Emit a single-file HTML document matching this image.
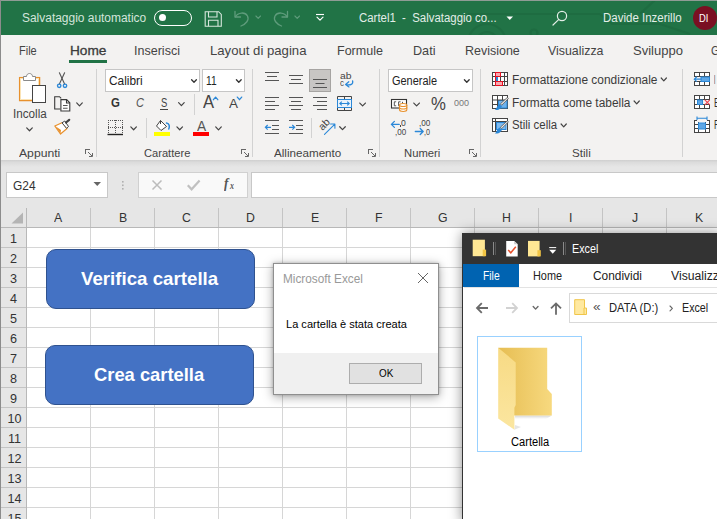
<!DOCTYPE html>
<html lang="it"><head><meta charset="utf-8"><title>Excel</title>
<style>
html,body{margin:0;padding:0;}
body{width:717px;height:519px;overflow:hidden;background:#e6e6e6;font-family:"Liberation Sans",sans-serif;}
#root{position:relative;width:717px;height:519px;overflow:hidden;background:#e6e6e6;}
.b{position:absolute;box-sizing:border-box;}
.t{position:absolute;white-space:pre;transform-origin:0 50%;display:block;}
svg.ov{position:absolute;left:0;top:0;}
</style></head><body><div id="root">
<div class="b" style="left:0px;top:0px;width:717px;height:35px;background:#217346;"></div>
<svg class="ov" width="717" height="519" viewBox="0 0 717 519"><g fill="none" stroke="#1e6c41" stroke-width="2.200"><path d="M468 14 H600 L612 24 H660 L690 34"/><circle cx="487" cy="43" r="19"/><circle cx="487" cy="43" r="11"/><circle cx="534" cy="33" r="3.500"/><path d="M655 0 L640 14"/></g></svg>
<div class="b" style="left:0px;top:35px;width:717px;height:126px;background:#f3f2f1;"></div>
<div class="b" style="left:0px;top:0px;width:717px;height:1px;background:#8f9c95;"></div>
<span class="t" style="left:22.20px;top:11.52px;font-size:12.5px;line-height:12.5px;color:#d4e5db;transform:scaleX(0.9558);">Salvataggio automatico</span>
<div class="b" style="left:154px;top:9.5px;width:38px;height:16px;background:transparent;border:1.3px solid #fff;border-radius:8px;"></div>
<div class="b" style="left:158.5px;top:14px;width:7.4px;height:7.4px;background:#fff;border-radius:50%;"></div>
<span class="t" style="left:358.60px;top:11.52px;font-size:12.5px;line-height:12.5px;color:#e3eee8;transform:scaleX(0.9128);">Cartel1  -  Salvataggio co...</span>
<span class="t" style="left:602.90px;top:11.72px;font-size:12.5px;line-height:12.5px;color:#e3eee8;transform:scaleX(0.9200);">Davide Inzerillo</span>
<div class="b" style="left:693.2px;top:6px;width:24.2px;height:24.2px;background:#7a1022;border-radius:50%;"></div>
<span class="t" style="left:699.40px;top:12.79px;font-size:11px;line-height:11px;color:#fff;transform:scaleX(0.8545);">DI</span>
<svg class="ov" width="717" height="519" viewBox="0 0 717 519"><g fill="none" stroke="#d6e6dc" stroke-width="1.1"><path d="M205.2 11.7 H218.6 L221.3 14.4 V26.3 H205.2 Z"/><path d="M208.5 11.7 V17 H217 V11.7"/><path d="M208.5 26.3 V20.3 H218 V26.3"/></g><g fill="none" stroke="#5f9c7c" stroke-width="1.3" stroke-linecap="round" stroke-linejoin="round"><path d="M235 11.5 V17 H240.5"/><path d="M235.3 16.8 C238 12.2 245 11.6 247.5 16 C249.5 20 246 24 241 26"/><path d="M287.5 11.5 V17 H282"/><path d="M287.2 16.8 C284.5 12.2 277.5 11.6 275 16 C273 20 276.500 24 281.500 26"/></g><path d="M255.90 16.00 L258.20 18.40 L260.50 16.00" fill="none" stroke="#5f9c7c" stroke-width="1.1" stroke-linecap="round" stroke-linejoin="round"/><path d="M294.90 16.00 L297.20 18.40 L299.50 16.00" fill="none" stroke="#5f9c7c" stroke-width="1.1" stroke-linecap="round" stroke-linejoin="round"/><path d="M316 14.5 H324" stroke="#fff" stroke-width="1.1"/><path d="M317.00 17.20 L320.00 20.20 L323.00 17.20" fill="none" stroke="#fff" stroke-width="1.2" stroke-linecap="round" stroke-linejoin="round"/><path d="M506.5 16.5 H513 L509.75 20 Z" fill="#fff"/><g fill="none" stroke="#e4efe8" stroke-width="1.2" stroke-linecap="round"><circle cx="562" cy="16" r="4.6"/><path d="M558.6 19.6 L553 25"/></g></svg>
<span class="t" style="left:18.70px;top:44.50px;font-size:12.4px;line-height:12.4px;color:#444;transform:scaleX(0.8866);">File</span>
<span class="t" style="left:69.70px;top:44.50px;font-size:12.4px;line-height:12.4px;color:#3c3c3c;transform:scaleX(1.1025);-webkit-text-stroke:0.3px #3c3c3c;">Home</span>
<div class="b" style="left:69px;top:60px;width:38px;height:3px;background:#217346;"></div>
<span class="t" style="left:134.00px;top:44.50px;font-size:12.4px;line-height:12.4px;color:#444;transform:scaleX(1.0108);">Inserisci</span>
<span class="t" style="left:210.20px;top:44.50px;font-size:12.4px;line-height:12.4px;color:#444;transform:scaleX(1.0606);">Layout di pagina</span>
<span class="t" style="left:337.40px;top:44.50px;font-size:12.4px;line-height:12.4px;color:#444;transform:scaleX(1.0108);">Formule</span>
<span class="t" style="left:413.30px;top:44.50px;font-size:12.4px;line-height:12.4px;color:#444;transform:scaleX(1.0194);">Dati</span>
<span class="t" style="left:465.00px;top:44.50px;font-size:12.4px;line-height:12.4px;color:#444;transform:scaleX(1.0067);">Revisione</span>
<span class="t" style="left:548.20px;top:44.50px;font-size:12.4px;line-height:12.4px;color:#444;transform:scaleX(0.9986);">Visualizza</span>
<span class="t" style="left:633.00px;top:44.50px;font-size:12.4px;line-height:12.4px;color:#444;transform:scaleX(1.0514);">Sviluppo</span>
<span class="t" style="left:711.00px;top:44.50px;font-size:12.4px;line-height:12.4px;color:#444;transform:scaleX(0.8788);">G</span>
<div class="b" style="left:96px;top:69px;width:1px;height:88px;background:#d2d2d2;"></div>
<div class="b" style="left:252px;top:69px;width:1px;height:88px;background:#d2d2d2;"></div>
<div class="b" style="left:379px;top:69px;width:1px;height:88px;background:#d2d2d2;"></div>
<div class="b" style="left:480px;top:69px;width:1px;height:88px;background:#d2d2d2;"></div>
<div class="b" style="left:682px;top:69px;width:1px;height:88px;background:#d2d2d2;"></div>
<span class="t" style="left:19.40px;top:147.51px;font-size:11.8px;line-height:11.8px;color:#444;transform:scaleX(1.0324);">Appunti</span>
<span class="t" style="left:143.60px;top:147.51px;font-size:11.8px;line-height:11.8px;color:#444;transform:scaleX(0.9430);">Carattere</span>
<span class="t" style="left:274.40px;top:147.51px;font-size:11.8px;line-height:11.8px;color:#444;transform:scaleX(0.9867);">Allineamento</span>
<span class="t" style="left:403.50px;top:147.51px;font-size:11.8px;line-height:11.8px;color:#444;transform:scaleX(0.9539);">Numeri</span>
<span class="t" style="left:572.30px;top:147.51px;font-size:11.8px;line-height:11.8px;color:#444;transform:scaleX(0.9843);">Stili</span>
<div class="b" style="left:0px;top:160px;width:717px;height:7px;background:linear-gradient(#cfcfcf,#dcdcdc 35%,#e6e6e6);"></div>
<span class="t" style="left:12.70px;top:107.54px;font-size:12px;line-height:12px;color:#444;transform:scaleX(0.9729);">Incolla</span>
<div class="b" style="left:105px;top:69px;width:95px;height:23px;background:#fff;border:1px solid #c6c6c6;"></div>
<span class="t" style="left:108.60px;top:75.04px;font-size:12px;line-height:12px;color:#222;transform:scaleX(0.9877);">Calibri</span>
<div class="b" style="left:202px;top:69px;width:43px;height:23px;background:#fff;border:1px solid #c6c6c6;"></div>
<span class="t" style="left:206.00px;top:75.04px;font-size:12px;line-height:12px;color:#222;transform:scaleX(0.8494);">11</span>
<span class="t" style="left:111.30px;top:96.90px;font-size:12.4px;line-height:12.4px;color:#333;transform:scaleX(0.9202);font-weight:700;">G</span>
<span class="t" style="left:135.80px;top:96.90px;font-size:12.4px;line-height:12.4px;color:#555;transform:scaleX(0.8948);font-style:italic;">C</span>
<span class="t" style="left:160.90px;top:96.90px;font-size:12.4px;line-height:12.4px;color:#444;transform:scaleX(0.7640);">S</span>
<div class="b" style="left:160px;top:109px;width:8.4px;height:1px;background:#444;"></div>
<div class="b" style="left:194px;top:94px;width:1px;height:21px;background:#d2d2d2;"></div>
<span class="t" style="left:203.00px;top:93.82px;font-size:17.7px;line-height:17.7px;color:#444;transform:scaleX(0.9360);">A</span>
<span class="t" style="left:228.60px;top:97.29px;font-size:13.6px;line-height:13.6px;color:#444;transform:scaleX(0.9877);">A</span>
<div class="b" style="left:146px;top:118px;width:1px;height:20px;background:#d2d2d2;"></div>
<span class="t" style="left:196.60px;top:118.10px;font-size:15px;line-height:15px;color:#555;transform:scaleX(0.9154);">A</span>
<div class="b" style="left:309px;top:69px;width:22px;height:23px;background:#c8c6c4;border:1px solid #a6a4a2;"></div>
<span class="t" style="left:339.50px;top:71.88px;font-size:9px;line-height:9px;color:#444;transform:scaleX(1.1512);">ab</span>
<span class="t" style="left:339.80px;top:79.38px;font-size:9px;line-height:9px;color:#444;transform:scaleX(0.8889);">c</span>
<div class="b" style="left:311px;top:118px;width:1px;height:20px;background:#d2d2d2;"></div>
<span class="t" style="left:319.800px;top:122.800px;width:11.500px;text-align:center;font-size:10.500px;line-height:11px;color:#444;transform:rotate(-45deg);transform-origin:50%% 50%%;">ab</span>
<div class="b" style="left:388px;top:69px;width:85px;height:23px;background:#fff;border:1px solid #c6c6c6;"></div>
<span class="t" style="left:392.00px;top:75.04px;font-size:12px;line-height:12px;color:#222;transform:scaleX(0.9113);">Generale</span>
<span class="t" style="left:430.50px;top:94.66px;font-size:18.6px;line-height:18.6px;color:#444;transform:scaleX(0.9001);">%</span>
<span class="t" style="left:454.20px;top:99.21px;font-size:9.2px;line-height:9.2px;color:#777;transform:scaleX(0.9763);">000</span>
<span class="t" style="left:401.20px;top:119.10px;font-size:8.5px;line-height:8.5px;color:#444;transform:scaleX(1.0175);">0</span>
<div class="b" style="left:400px;top:125.3px;width:1px;height:1.6px;background:#444;"></div>
<span class="t" style="left:394.80px;top:127.70px;font-size:8.5px;line-height:8.5px;color:#444;transform:scaleX(0.9479);">,00</span>
<span class="t" style="left:418.60px;top:119.10px;font-size:8.5px;line-height:8.5px;color:#444;transform:scaleX(0.9649);">,00</span>
<span class="t" style="left:424.00px;top:127.70px;font-size:8.5px;line-height:8.5px;color:#444;transform:scaleX(0.8454);">,0</span>
<span class="t" style="left:511.50px;top:73.54px;font-size:12px;line-height:12px;color:#3b3b3b;transform:scaleX(0.9914);">Formattazione condizionale</span>
<span class="t" style="left:511.50px;top:96.64px;font-size:12px;line-height:12px;color:#3b3b3b;transform:scaleX(0.9920);">Formatta come tabella</span>
<span class="t" style="left:511.50px;top:119.24px;font-size:12px;line-height:12px;color:#3b3b3b;transform:scaleX(0.9515);">Stili cella</span>
<span class="t" style="left:714.20px;top:73.54px;font-size:12px;line-height:12px;color:#222;transform:scaleX(0.3869);">I</span>
<span class="t" style="left:713.80px;top:96.64px;font-size:12px;line-height:12px;color:#333;transform:scaleX(0.7143);">E</span>
<span class="t" style="left:713.80px;top:119.24px;font-size:12px;line-height:12px;color:#333;transform:scaleX(0.7104);">F</span>
<svg class="ov" width="717" height="519" viewBox="0 0 717 519"><path d="M85 149.5 H90 M85.5 149 V154" stroke="#666" stroke-width="1" fill="none"/><path d="M88 152 L92 156 M92.5 153 V156.5 H89" stroke="#666" stroke-width="1" fill="none"/><path d="M241 149.5 H246 M241.5 149 V154" stroke="#666" stroke-width="1" fill="none"/><path d="M244 152 L248 156 M248.5 153 V156.5 H245" stroke="#666" stroke-width="1" fill="none"/><path d="M368 149.5 H373 M368.5 149 V154" stroke="#666" stroke-width="1" fill="none"/><path d="M371 152 L375 156 M375.5 153 V156.5 H372" stroke="#666" stroke-width="1" fill="none"/><path d="M469 149.5 H474 M469.5 149 V154" stroke="#666" stroke-width="1" fill="none"/><path d="M472 152 L476 156 M476.5 153 V156.5 H473" stroke="#666" stroke-width="1" fill="none"/><rect x="19.600" y="77.600" width="20" height="23" fill="#fff" stroke="#e8912d" stroke-width="1.300"/><rect x="20.5" y="78.500" width="18" height="21" fill="none" stroke="#fbe3b5" stroke-width="1"/><path d="M23.500 80.500 V76.500 H26.500 C26.500 72.500 32.500 72.500 32.500 76.500 H35.500 V80.500 Z" fill="#fff" stroke="#8a8a8a" stroke-width="1"/><rect x="32.500" y="85.500" width="13" height="17" fill="#fff" stroke="#444" stroke-width="1"/><path d="M26.70 127.85 L29.50 130.75 L32.30 127.85" fill="none" stroke="#444" stroke-width="1.2" stroke-linecap="round" stroke-linejoin="round"/><g fill="none" stroke="#555" stroke-width="1.100" stroke-linecap="round"><path d="M59.400 72.700 L64.600 84"/><path d="M64.600 72.700 L59.400 84"/></g><g fill="none" stroke="#2b88d8" stroke-width="1.400"><circle cx="59.200" cy="85.800" r="1.700"/><circle cx="65" cy="85.800" r="1.700"/></g><g fill="none" stroke="#3a3a3a" stroke-width="1.100"><path d="M60.500 109 H54.700 V96.700 H59.500 L61.200 98.400"/><path d="M60.900 99.600 H66.600 L69.800 102.800 V111 H60.900 Z" fill="#fff"/><path d="M66.500 99.600 V103 H69.800"/><path d="M63 105.500 H67.600 M63 108.300 H67.600" stroke="#555"/></g><path d="M76.70 102.95 L79.50 105.85 L82.30 102.95" fill="none" stroke="#444" stroke-width="1.2" stroke-linecap="round" stroke-linejoin="round"/><g stroke-linejoin="round"><path d="M54.800 126 L62.500 122.500 L67 128.500 L60.500 134 Z" fill="#fff" stroke="#e8912d" stroke-width="1.2"/><path d="M55.500 126.300 L61 130 L60.500 133.500 Z" fill="#e8912d"/><path d="M62 122.800 L64.800 121 L68.500 126.500 L66.500 128.300 Z" fill="#fff" stroke="#444" stroke-width="1"/><path d="M66 122.500 L69.200 119.800" stroke="#444" stroke-width="2.200" stroke-linecap="round"/></g><path d="M191.60 79.70 L194.00 82.30 L196.40 79.70" fill="none" stroke="#333" stroke-width="1.3" stroke-linecap="round" stroke-linejoin="round"/><path d="M236.40 79.70 L238.80 82.30 L241.20 79.70" fill="none" stroke="#333" stroke-width="1.3" stroke-linecap="round" stroke-linejoin="round"/><path d="M178.60 102.65 L181.40 105.55 L184.20 102.65" fill="none" stroke="#444" stroke-width="1.2" stroke-linecap="round" stroke-linejoin="round"/><path d="M213.40 99.70 L215.60 97.10 L217.80 99.70" fill="none" stroke="#2b88d8" stroke-width="1.3" stroke-linecap="round" stroke-linejoin="round"/><path d="M237.30 97.10 L239.50 99.70 L241.70 97.10" fill="none" stroke="#2b88d8" stroke-width="1.3" stroke-linecap="round" stroke-linejoin="round"/><g stroke="#555" stroke-width="1" stroke-dasharray="1 1" fill="none"><path d="M108 120.500 H123"/><path d="M108.500 120 V133"/><path d="M122.500 120 V133"/><path d="M115.500 120 V133"/><path d="M108 127.500 H123"/></g><path d="M107.500 134.500 H123" stroke="#222" stroke-width="1.400"/><path d="M130.80 126.85 L133.60 129.75 L136.40 126.85" fill="none" stroke="#444" stroke-width="1.2" stroke-linecap="round" stroke-linejoin="round"/><g fill="#fff" stroke="#444" stroke-width="1" stroke-linejoin="round"><path d="M160.500 120.500 L166.500 126.500 L161 130.500 L156.500 126 Z"/><path d="M160.500 120.500 L160.500 124"/></g><path d="M166.500 123 C169.500 123.500 169.800 126.500 168.800 129" fill="none" stroke="#2b88d8" stroke-width="1.500" stroke-linecap="round"/><rect x="154" y="132" width="16" height="4" fill="#ffff00"/><path d="M176.90 126.85 L179.70 129.75 L182.50 126.85" fill="none" stroke="#444" stroke-width="1.2" stroke-linecap="round" stroke-linejoin="round"/><rect x="193" y="132" width="16" height="4" fill="#ff0000"/><path d="M215.70 126.95 L218.50 129.85 L221.30 126.95" fill="none" stroke="#444" stroke-width="1.2" stroke-linecap="round" stroke-linejoin="round"/><rect x="265" y="72" width="14" height="1" fill="#555"/><rect x="267" y="76" width="10" height="1" fill="#555"/><rect x="265" y="80" width="14" height="1" fill="#555"/><rect x="289" y="75" width="14" height="1" fill="#555"/><rect x="291" y="79" width="10" height="1" fill="#555"/><rect x="289" y="83" width="14" height="1" fill="#555"/><rect x="313" y="79" width="14" height="1" fill="#555"/><rect x="315.5" y="83" width="9" height="1" fill="#555"/><rect x="313" y="87" width="14" height="1" fill="#555"/><path d="M352.600 81 C353.400 84.500 350.500 85.200 346.500 84.600 M348.800 81.800 L345.600 84.400 L349 86.900" fill="none" stroke="#2b88d8" stroke-width="1.300" stroke-linecap="round" stroke-linejoin="round"/><rect x="265" y="97" width="14" height="1" fill="#555"/><rect x="265" y="101" width="10" height="1" fill="#555"/><rect x="265" y="105" width="14" height="1" fill="#555"/><rect x="265" y="109" width="10" height="1" fill="#555"/><rect x="289" y="97" width="14" height="1" fill="#555"/><rect x="291" y="101" width="10" height="1" fill="#555"/><rect x="289" y="105" width="14" height="1" fill="#555"/><rect x="291" y="109" width="10" height="1" fill="#555"/><rect x="313" y="97" width="14" height="1" fill="#555"/><rect x="317" y="101" width="10" height="1" fill="#555"/><rect x="313" y="105" width="14" height="1" fill="#555"/><rect x="317" y="109" width="10" height="1" fill="#555"/><g fill="none" stroke="#444" stroke-width="1"><path d="M337.500 99.500 V96.500 H351.500 V99.500 M337.500 107.500 V110.500 H351.500 V107.500 M344.500 96.500 V99.500 M344.500 107.500 V110.500"/></g><rect x="337.500" y="99.500" width="14" height="8" fill="#eaf3fb" stroke="#2b88d8" stroke-width="1"/><path d="M340 103.500 H349 M341.800 101.600 L339.800 103.500 L341.800 105.400 M347.200 101.600 L349.200 103.500 L347.200 105.400" fill="none" stroke="#2b88d8" stroke-width="1.100"/><path d="M359.80 103.05 L362.60 105.95 L365.40 103.05" fill="none" stroke="#444" stroke-width="1.2" stroke-linecap="round" stroke-linejoin="round"/><rect x="265" y="120" width="14" height="1" fill="#555"/><rect x="272" y="125" width="7" height="1" fill="#555"/><rect x="272" y="129" width="7" height="1" fill="#555"/><rect x="265" y="133" width="14" height="1" fill="#555"/><path d="M265.500 127.300 H271 M267.700 125 L265.400 127.300 L267.700 129.600" fill="none" stroke="#2b88d8" stroke-width="1.200"/><rect x="289" y="120" width="14" height="1" fill="#555"/><rect x="296" y="125" width="7" height="1" fill="#555"/><rect x="296" y="129" width="7" height="1" fill="#555"/><rect x="289" y="133" width="14" height="1" fill="#555"/><path d="M289 127.300 H294.500 M292.300 125 L294.600 127.300 L292.300 129.600" fill="none" stroke="#2b88d8" stroke-width="1.200"/><path d="M324.500 134.400 L334.600 124.300 M330.600 124 H334.900 V128.300" fill="none" stroke="#2b88d8" stroke-width="1.100" stroke-linecap="round" stroke-linejoin="round"/><path d="M339.70 126.75 L342.50 129.65 L345.30 126.75" fill="none" stroke="#444" stroke-width="1.2" stroke-linecap="round" stroke-linejoin="round"/><path d="M464.40 79.70 L466.80 82.30 L469.20 79.70" fill="none" stroke="#333" stroke-width="1.3" stroke-linecap="round" stroke-linejoin="round"/><rect x="391.500" y="99.500" width="15" height="8.500" fill="#fff" stroke="#333" stroke-width="1.100"/><path d="M396.200 101.800 H394.300 V105.800 H396.200 M400.600 101.800 H398.600 V105.800 H400.600 M402.500 101.800 V105" fill="none" stroke="#444" stroke-width="0.900"/><g fill="#fff" stroke="#e8912d" stroke-width="1.100"><path d="M399.500 105 V109.800 C399.500 112 406.800 112 406.800 109.800 V105"/><ellipse cx="403.150" cy="105" rx="3.650" ry="1.500"/><path d="M399.500 107.500 C399.500 109.500 406.800 109.500 406.800 107.500" fill="none"/></g><path d="M413.80 103.05 L416.60 105.95 L419.40 103.05" fill="none" stroke="#444" stroke-width="1.2" stroke-linecap="round" stroke-linejoin="round"/><path d="M391.400 124.400 H399.200 M394.400 121.400 L391.400 124.400 L394.400 127.400" fill="none" stroke="#2b88d8" stroke-width="1.300" stroke-linecap="round" stroke-linejoin="round"/><path d="M415.300 131.500 H423.200 M420.200 128.500 L423.200 131.500 L420.200 134.500" fill="none" stroke="#2b88d8" stroke-width="1.300" stroke-linecap="round" stroke-linejoin="round"/><g><rect x="492.500" y="72.500" width="15" height="13" fill="#fff" stroke="#444" stroke-width="1"/><path d="M492.500 76.500 H507.500 M492.500 81.500 H507.500 M500.500 72.500 V85.500 M504.500 72.500 V85.500" stroke="#444" stroke-width="1" fill="none"/><rect x="495.500" y="72.500" width="5" height="4" fill="#f8a8b0" stroke="#e81123" stroke-width="1"/><rect x="495.500" y="81.500" width="7" height="4" fill="#f8a8b0" stroke="#e81123" stroke-width="1"/><path d="M495.500 76.500 V81.500" stroke="#e81123" stroke-width="1"/><rect x="496" y="77" width="2" height="4" fill="#2b88d8"/></g><path d="M661.20 78.00 L663.80 80.80 L666.40 78.00" fill="none" stroke="#444" stroke-width="1.2" stroke-linecap="round" stroke-linejoin="round"/><g><rect x="492.500" y="95.500" width="15" height="13" fill="#fff" stroke="#444" stroke-width="1"/><rect x="498.500" y="100.500" width="8.500" height="7.500" fill="#6db1ec" stroke="#2b88d8" stroke-width="1"/><path d="M492.500 100 H507.500 M492.500 104.500 H498 M497.500 95.500 V108.500 M502.500 95.500 V100" stroke="#444" stroke-width="1" fill="none"/></g><path d="M500.4 103.8 L507.4 97.4 L508.4 98.5 L501.7 105.2 Z" fill="#e8e8e8" stroke="#555" stroke-width="0.800" stroke-linejoin="round"/><path d="M499.4 104 L502 106.6 L500.3 108.6 C498.8 110.1 496.3 110.4 494.8 109.8 C496.6 109 496.3 106.8 499.4 104 Z" fill="#2b88d8"/><path d="M634.10 101.00 L636.70 103.80 L639.30 101.00" fill="none" stroke="#444" stroke-width="1.2" stroke-linecap="round" stroke-linejoin="round"/><g><rect x="492.500" y="118.500" width="15" height="13" fill="#fff" stroke="#444" stroke-width="1"/><rect x="496.500" y="122.500" width="9.500" height="7" fill="#7dbaf0" stroke="#2b88d8" stroke-width="1"/><path d="M492.500 121.500 H507.500 M495.500 118.500 V131.500" stroke="#444" stroke-width="1" fill="none"/></g><path d="M500.4 127.2 L507.4 120.8 L508.4 121.9 L501.7 128.6 Z" fill="#e8e8e8" stroke="#555" stroke-width="0.800" stroke-linejoin="round"/><path d="M499.4 127.4 L502 130 L500.3 132 C498.8 133.5 496.3 133.8 494.8 133.2 C496.6 132.4 496.3 130.2 499.4 127.4 Z" fill="#2b88d8"/><path d="M561.10 124.00 L563.70 126.80 L566.30 124.00" fill="none" stroke="#444" stroke-width="1.2" stroke-linecap="round" stroke-linejoin="round"/><g><rect x="694.500" y="72.500" width="15" height="13" fill="#fff" stroke="#444" stroke-width="1"/><path d="M694.500 76.500 H709.500 M694.500 81.500 H709.500 M699.500 72.500 V76.500 M704.500 72.500 V76.500 M699.500 81.500 V85.500 M704.500 81.500 V85.500" stroke="#444" fill="none"/><rect x="694" y="77" width="7" height="4" fill="#f3f3f3"/><rect x="701" y="77" width="8.500" height="4.500" fill="#5ea7e6" stroke="#2b88d8" stroke-width="1"/><path d="M694.300 79.200 H701.500 M696.800 76.800 L694.300 79.200 L696.800 81.600" stroke="#2b88d8" stroke-width="1.200" fill="none"/></g><g><rect x="694.500" y="95.500" width="15" height="13" fill="#fff" stroke="#444" stroke-width="1"/><path d="M694.500 99.500 H709.500 M694.500 104.500 H709.500 M699.500 95.500 V99.500 M704.500 95.500 V99.500 M699.500 104.500 V108.500 M704.500 104.500 V108.500" stroke="#444" fill="none"/><rect x="703" y="100" width="8" height="4" fill="#f3f3f3"/><rect x="697.500" y="100" width="5" height="4.500" fill="#5ea7e6" stroke="#2b88d8" stroke-width="1"/><path d="M704.800 99.800 L709.800 104.800 M709.800 99.800 L704.800 104.800" stroke="#f0424f" stroke-width="1.100" fill="none"/></g><g><rect x="694.500" y="120.500" width="15" height="12" fill="#fff" stroke="#444" stroke-width="1"/><path d="M694.500 124.500 H709.500 M694.500 128.500 H709.500 M698.500 120.500 V132.500 M705.500 120.500 V132.500" stroke="#444" fill="none"/><rect x="698.500" y="123" width="7" height="6" fill="#5ea7e6" stroke="#2b88d8" stroke-width="1"/><rect x="697" y="119" width="10" height="3" fill="#f3f3f3"/><path d="M697 118.300 H707 M697 116.500 V120 M707 116.500 V120" stroke="#2b88d8" stroke-width="1.100" fill="none"/></g></svg>
<div class="b" style="left:6px;top:172px;width:102px;height:26px;background:#fff;border:1px solid #c8c8c8;"></div>
<span class="t" style="left:13.00px;top:180.13px;font-size:12.6px;line-height:12.6px;color:#333;transform:scaleX(0.9490);">G24</span>
<div class="b" style="left:138px;top:172px;width:110px;height:26px;background:#f9f9f9;border:1px solid #d0d0d0;"></div>
<span class="t" style="left:224.00px;top:176.13px;font-size:14.5px;line-height:14.5px;color:#555;transform:scaleX(0.9031);font-weight:700;font-style:italic;font-family:'Liberation Serif',serif;">f</span>
<span class="t" style="left:230.35px;top:181.13px;font-size:10px;line-height:10px;color:#555;transform:scaleX(0.7874);font-weight:700;font-style:italic;font-family:'Liberation Serif',serif;">x</span>
<div class="b" style="left:251px;top:172px;width:470px;height:26px;background:#fff;border:1px solid #c8c8c8;"></div>
<div class="b" style="left:27px;top:228px;width:690px;height:291px;background:#fff;"></div>
<div class="b" style="left:27px;top:247px;width:690px;height:1px;background:#d6d6d6;"></div>
<div class="b" style="left:27px;top:267px;width:690px;height:1px;background:#d6d6d6;"></div>
<div class="b" style="left:27px;top:287px;width:690px;height:1px;background:#d6d6d6;"></div>
<div class="b" style="left:27px;top:307px;width:690px;height:1px;background:#d6d6d6;"></div>
<div class="b" style="left:27px;top:327px;width:690px;height:1px;background:#d6d6d6;"></div>
<div class="b" style="left:27px;top:347px;width:690px;height:1px;background:#d6d6d6;"></div>
<div class="b" style="left:27px;top:367px;width:690px;height:1px;background:#d6d6d6;"></div>
<div class="b" style="left:27px;top:387px;width:690px;height:1px;background:#d6d6d6;"></div>
<div class="b" style="left:27px;top:407px;width:690px;height:1px;background:#d6d6d6;"></div>
<div class="b" style="left:27px;top:427px;width:690px;height:1px;background:#d6d6d6;"></div>
<div class="b" style="left:27px;top:447px;width:690px;height:1px;background:#d6d6d6;"></div>
<div class="b" style="left:27px;top:467px;width:690px;height:1px;background:#d6d6d6;"></div>
<div class="b" style="left:27px;top:487px;width:690px;height:1px;background:#d6d6d6;"></div>
<div class="b" style="left:27px;top:507px;width:690px;height:1px;background:#d6d6d6;"></div>
<div class="b" style="left:27px;top:527px;width:690px;height:1px;background:#d6d6d6;"></div>
<div class="b" style="left:90px;top:228px;width:1px;height:291px;background:#d6d6d6;"></div>
<div class="b" style="left:154px;top:228px;width:1px;height:291px;background:#d6d6d6;"></div>
<div class="b" style="left:218px;top:228px;width:1px;height:291px;background:#d6d6d6;"></div>
<div class="b" style="left:282px;top:228px;width:1px;height:291px;background:#d6d6d6;"></div>
<div class="b" style="left:346px;top:228px;width:1px;height:291px;background:#d6d6d6;"></div>
<div class="b" style="left:410px;top:228px;width:1px;height:291px;background:#d6d6d6;"></div>
<div class="b" style="left:474px;top:228px;width:1px;height:291px;background:#d6d6d6;"></div>
<div class="b" style="left:538px;top:228px;width:1px;height:291px;background:#d6d6d6;"></div>
<div class="b" style="left:602px;top:228px;width:1px;height:291px;background:#d6d6d6;"></div>
<div class="b" style="left:666px;top:228px;width:1px;height:291px;background:#d6d6d6;"></div>
<div class="b" style="left:730px;top:228px;width:1px;height:291px;background:#d6d6d6;"></div>
<div class="b" style="left:0px;top:227px;width:717px;height:1px;background:#b8b8b8;"></div>
<div class="b" style="left:26px;top:208px;width:1px;height:311px;background:#b8b8b8;"></div>
<div class="b" style="left:90px;top:208px;width:1px;height:19px;background:#c4c4c4;"></div>
<div class="b" style="left:154px;top:208px;width:1px;height:19px;background:#c4c4c4;"></div>
<div class="b" style="left:218px;top:208px;width:1px;height:19px;background:#c4c4c4;"></div>
<div class="b" style="left:282px;top:208px;width:1px;height:19px;background:#c4c4c4;"></div>
<div class="b" style="left:346px;top:208px;width:1px;height:19px;background:#c4c4c4;"></div>
<div class="b" style="left:410px;top:208px;width:1px;height:19px;background:#c4c4c4;"></div>
<div class="b" style="left:474px;top:208px;width:1px;height:19px;background:#c4c4c4;"></div>
<div class="b" style="left:538px;top:208px;width:1px;height:19px;background:#c4c4c4;"></div>
<div class="b" style="left:602px;top:208px;width:1px;height:19px;background:#c4c4c4;"></div>
<div class="b" style="left:666px;top:208px;width:1px;height:19px;background:#c4c4c4;"></div>
<div class="b" style="left:730px;top:208px;width:1px;height:19px;background:#c4c4c4;"></div>
<div class="b" style="left:0px;top:247px;width:26px;height:1px;background:#c4c4c4;"></div>
<div class="b" style="left:0px;top:267px;width:26px;height:1px;background:#c4c4c4;"></div>
<div class="b" style="left:0px;top:287px;width:26px;height:1px;background:#c4c4c4;"></div>
<div class="b" style="left:0px;top:307px;width:26px;height:1px;background:#c4c4c4;"></div>
<div class="b" style="left:0px;top:327px;width:26px;height:1px;background:#c4c4c4;"></div>
<div class="b" style="left:0px;top:347px;width:26px;height:1px;background:#c4c4c4;"></div>
<div class="b" style="left:0px;top:367px;width:26px;height:1px;background:#c4c4c4;"></div>
<div class="b" style="left:0px;top:387px;width:26px;height:1px;background:#c4c4c4;"></div>
<div class="b" style="left:0px;top:407px;width:26px;height:1px;background:#c4c4c4;"></div>
<div class="b" style="left:0px;top:427px;width:26px;height:1px;background:#c4c4c4;"></div>
<div class="b" style="left:0px;top:447px;width:26px;height:1px;background:#c4c4c4;"></div>
<div class="b" style="left:0px;top:467px;width:26px;height:1px;background:#c4c4c4;"></div>
<div class="b" style="left:0px;top:487px;width:26px;height:1px;background:#c4c4c4;"></div>
<div class="b" style="left:0px;top:507px;width:26px;height:1px;background:#c4c4c4;"></div>
<div class="b" style="left:0px;top:527px;width:26px;height:1px;background:#c4c4c4;"></div>
<span class="t" style="left:54.47px;top:212.45px;font-size:12.7px;line-height:12.7px;color:#333;transform:scaleX(0.9700);">A</span>
<span class="t" style="left:118.50px;top:212.45px;font-size:12.7px;line-height:12.7px;color:#333;transform:scaleX(0.9700);">B</span>
<span class="t" style="left:182.17px;top:212.45px;font-size:12.7px;line-height:12.7px;color:#333;transform:scaleX(0.9700);">C</span>
<span class="t" style="left:246.17px;top:212.45px;font-size:12.7px;line-height:12.7px;color:#333;transform:scaleX(0.9700);">D</span>
<span class="t" style="left:310.50px;top:212.45px;font-size:12.7px;line-height:12.7px;color:#333;transform:scaleX(0.9700);">E</span>
<span class="t" style="left:374.84px;top:212.45px;font-size:12.7px;line-height:12.7px;color:#333;transform:scaleX(0.9700);">F</span>
<span class="t" style="left:437.80px;top:212.45px;font-size:12.7px;line-height:12.7px;color:#333;transform:scaleX(0.9700);">G</span>
<span class="t" style="left:502.17px;top:212.45px;font-size:12.7px;line-height:12.7px;color:#333;transform:scaleX(0.9700);">H</span>
<span class="t" style="left:568.88px;top:212.45px;font-size:12.7px;line-height:12.7px;color:#333;transform:scaleX(0.9700);">I</span>
<span class="t" style="left:631.52px;top:212.45px;font-size:12.7px;line-height:12.7px;color:#333;transform:scaleX(0.9700);">J</span>
<span class="t" style="left:694.50px;top:212.45px;font-size:12.7px;line-height:12.7px;color:#333;transform:scaleX(0.9700);">K</span>
<span class="t" style="left:9.90px;top:233.43px;font-size:12.6px;line-height:12.6px;color:#333;transform:scaleX(1.0000);">1</span>
<span class="t" style="left:9.90px;top:253.43px;font-size:12.6px;line-height:12.6px;color:#333;transform:scaleX(1.0000);">2</span>
<span class="t" style="left:9.90px;top:273.43px;font-size:12.6px;line-height:12.6px;color:#333;transform:scaleX(1.0000);">3</span>
<span class="t" style="left:9.90px;top:293.43px;font-size:12.6px;line-height:12.6px;color:#333;transform:scaleX(1.0000);">4</span>
<span class="t" style="left:9.90px;top:313.43px;font-size:12.6px;line-height:12.6px;color:#333;transform:scaleX(1.0000);">5</span>
<span class="t" style="left:9.90px;top:333.43px;font-size:12.6px;line-height:12.6px;color:#333;transform:scaleX(1.0000);">6</span>
<span class="t" style="left:9.90px;top:353.43px;font-size:12.6px;line-height:12.6px;color:#333;transform:scaleX(1.0000);">7</span>
<span class="t" style="left:9.90px;top:373.43px;font-size:12.6px;line-height:12.6px;color:#333;transform:scaleX(1.0000);">8</span>
<span class="t" style="left:9.90px;top:393.43px;font-size:12.6px;line-height:12.6px;color:#333;transform:scaleX(1.0000);">9</span>
<span class="t" style="left:7.51px;top:413.43px;font-size:12.6px;line-height:12.6px;color:#333;transform:scaleX(1.0000);">10</span>
<span class="t" style="left:7.95px;top:433.43px;font-size:12.6px;line-height:12.6px;color:#333;transform:scaleX(1.0000);">11</span>
<span class="t" style="left:7.51px;top:453.43px;font-size:12.6px;line-height:12.6px;color:#333;transform:scaleX(1.0000);">12</span>
<span class="t" style="left:7.51px;top:473.43px;font-size:12.6px;line-height:12.6px;color:#333;transform:scaleX(1.0000);">13</span>
<span class="t" style="left:7.51px;top:493.43px;font-size:12.6px;line-height:12.6px;color:#333;transform:scaleX(1.0000);">14</span>
<span class="t" style="left:7.51px;top:513.43px;font-size:12.6px;line-height:12.6px;color:#333;transform:scaleX(1.0000);">15</span>
<svg class="ov" width="717" height="519" viewBox="0 0 717 519"><path d="M93.500 182 H101 L97.250 186 Z" fill="#666"/><rect x="122" y="181" width="1.600" height="1.600" fill="#b0b0b0"/><rect x="122" y="184.5" width="1.600" height="1.600" fill="#b0b0b0"/><rect x="122" y="188" width="1.600" height="1.600" fill="#b0b0b0"/><path d="M152.500 180.500 L161.500 189.500 M161.500 180.500 L152.500 189.500" stroke="#bcbcbc" stroke-width="1.500" fill="none"/><path d="M187.800 185.200 L191.600 189.300 L199.600 180.500" stroke="#c0c0c0" stroke-width="2.200" fill="none"/><path d="M23 212.500 V223.500 H11.500 Z" fill="#b4b4b4"/></svg>
<div class="b" style="left:46px;top:249px;width:209px;height:60px;background:#4472c4;border:1px solid #2f528f;border-radius:10px;"></div>
<span class="t" style="left:81.00px;top:270.72px;font-size:17.7px;line-height:17.7px;color:#fff;transform:scaleX(1.0569);font-weight:700;">Verifica cartella</span>
<div class="b" style="left:45px;top:345px;width:209px;height:60px;background:#4472c4;border:1px solid #2f528f;border-radius:10px;"></div>
<span class="t" style="left:93.60px;top:366.72px;font-size:17.7px;line-height:17.7px;color:#fff;transform:scaleX(1.0370);font-weight:700;">Crea cartella</span>
<div class="b" style="left:273px;top:263px;width:166px;height:132px;background:#fff;border:1px solid #8f8f8f;box-shadow:0 2px 10px rgba(0,0,0,0.35),0 0 3px rgba(0,0,0,0.2);"></div>
<div class="b" style="left:274px;top:353px;width:164px;height:41px;background:#f0f0f0;"></div>
<span class="t" style="left:282.60px;top:272.50px;font-size:12.4px;line-height:12.4px;color:#999;transform:scaleX(0.9516);">Microsoft Excel</span>
<span class="t" style="left:285.70px;top:318.65px;font-size:11.4px;line-height:11.4px;color:#000;transform:scaleX(0.9697);">La cartella è stata creata</span>
<div class="b" style="left:349px;top:363px;width:73px;height:21px;background:#e1e1e1;border:1px solid #adadad;"></div>
<span class="t" style="left:378.70px;top:368.15px;font-size:11.4px;line-height:11.4px;color:#000;transform:scaleX(0.8681);">OK</span>
<svg class="ov" width="717" height="519" viewBox="0 0 717 519"><path d="M418 273 L428 283 M428 273 L418 283" stroke="#666" stroke-width="1" fill="none"/></svg>
<div class="b" style="left:462px;top:233px;width:260px;height:290px;background:#fff;box-shadow:0 0 12px rgba(0,0,0,0.45);"></div>
<div class="b" style="left:462px;top:233px;width:260px;height:31px;background:#333333;"></div>
<div class="b" style="left:462px;top:233px;width:1.3px;height:290px;background:#333333;"></div>
<div class="b" style="left:493px;top:242px;width:1px;height:12.5px;background:#8a8a8a;"></div>
<div class="b" style="left:495px;top:242px;width:1px;height:12.5px;background:#555;"></div>
<div class="b" style="left:563.3px;top:242px;width:1px;height:12.5px;background:#8a8a8a;"></div>
<div class="b" style="left:565.3px;top:242px;width:1px;height:12.5px;background:#555;"></div>
<span class="t" style="left:572.20px;top:242.70px;font-size:12.4px;line-height:12.4px;color:#fff;transform:scaleX(0.8675);">Excel</span>
<div class="b" style="left:463px;top:264px;width:56px;height:23px;background:#0063b1;"></div>
<span class="t" style="left:482.90px;top:269.74px;font-size:12px;line-height:12px;color:#fff;transform:scaleX(0.8592);">File</span>
<span class="t" style="left:533.30px;top:269.74px;font-size:12px;line-height:12px;color:#222;transform:scaleX(0.9082);">Home</span>
<span class="t" style="left:592.50px;top:269.74px;font-size:12px;line-height:12px;color:#222;transform:scaleX(0.9903);">Condividi</span>
<span class="t" style="left:670.70px;top:269.74px;font-size:12px;line-height:12px;color:#222;transform:scaleX(1.0171);">Visualizza</span>
<div class="b" style="left:464px;top:287px;width:260px;height:1px;background:#e3e3e3;"></div>
<div class="b" style="left:569px;top:293px;width:160px;height:30px;background:#fff;border:1px solid #d9d9d9;"></div>
<span class="t" style="left:593.20px;top:301.34px;font-size:12px;line-height:12px;color:#555;transform:scaleX(1.1411);">«</span>
<span class="t" style="left:609.30px;top:301.84px;font-size:12px;line-height:12px;color:#222;transform:scaleX(0.9308);">DATA (D:)</span>
<span class="t" style="left:682.40px;top:301.84px;font-size:12px;line-height:12px;color:#222;transform:scaleX(0.8930);">Excel</span>
<div class="b" style="left:477px;top:336px;width:105px;height:116px;background:#fff;border:1px solid #99d1ff;"></div>
<span class="t" style="left:510.50px;top:435.74px;font-size:12px;line-height:12px;color:#000;transform:scaleX(0.9251);">Cartella</span>
<svg class="ov" width="717" height="519" viewBox="0 0 717 519"><path d="M472.7 239.7 H484.9 V256.2 H472.7 Z" fill="#ffe794"/><path d="M482.7 249.6 H486.1 V256.2 H482.7 Z" fill="#f2c544"/><path d="M506.200 240.900 H514.200 L517.700 244.200 V256.400 H506.200 Z" fill="#fff"/><path d="M514.200 240.900 V244.200 H517.700 Z" fill="#c8c8c8"/><path d="M508.200 250 L510.800 252.800 L515.800 246.800" stroke="#e8512d" stroke-width="1.500" fill="none"/><path d="M528 240.9 H539.6 V256.4 H528 Z" fill="#ffe794"/><path d="M537.4 250.2 H540.8 V256.4 H537.4 Z" fill="#f2c544"/><path d="M549.200 247.600 H556.200" stroke="#fff" stroke-width="1"/><path d="M549.200 249.700 H556.200 L552.700 253.800 Z" fill="#fff"/><g fill="none" stroke="#6a6a6a" stroke-width="1.800" stroke-linejoin="miter"><path d="M477.200 308 H488 M481.800 303.200 L477 308 L481.800 312.800"/></g><g fill="none" stroke="#d2d2d2" stroke-width="1.800" stroke-linejoin="miter"><path d="M506 308 H516.800 M512.200 303.200 L517 308 L512.200 312.800"/></g><path d="M533.20 306.50 L535.60 309.10 L538.00 306.50" fill="none" stroke="#6a6a6a" stroke-width="1.4" stroke-linecap="round" stroke-linejoin="round"/><g fill="none" stroke="#6a6a6a" stroke-width="1.800" stroke-linejoin="miter"><path d="M556 303.600 V314.800 M551 308.400 L556 303.400 L561 308.400"/></g><path d="M574.700 299.700 H584.500 V314.500 H574.700 Z" fill="#ffe9a0" stroke="#f0c64a" stroke-width="1"/><path d="M584 308 H586.500 V314.500 H584 Z" fill="#ffe9a0" stroke="#f0c64a" stroke-width="1"/><path d="M670 306 L672.400 308.400 L670 310.800" fill="none" stroke="#666" stroke-width="1.100" stroke-linecap="round" stroke-linejoin="round"/><defs><linearGradient id="fg" x1="0" y1="0" x2="1" y2="0"><stop offset="0" stop-color="#e6bd52"/><stop offset="0.35" stop-color="#ecc762"/><stop offset="1" stop-color="#f7d97f"/></linearGradient><linearGradient id="ff" x1="0" y1="0" x2="0" y2="1"><stop offset="0" stop-color="#f7da84"/><stop offset="1" stop-color="#fbe6a0"/></linearGradient><linearGradient id="fs" x1="0" y1="0" x2="0" y2="1"><stop offset="0" stop-color="#000" stop-opacity="0.16"/><stop offset="1" stop-color="#000" stop-opacity="0"/></linearGradient></defs><path d="M515 415.500 H551.800 L546 419 H515 Z" fill="url(#fs)"/><path d="M514.400 429.800 L521 427 L515 425 Z" fill="#000" opacity="0.100"/><path d="M498.200 347.700 H547.200 V389.100 L551.800 394 V415.500 H514 V380 Z" fill="url(#fg)"/><path d="M498.200 347.700 L515.700 362.400 V405 L514.400 407.800 V429.800 L498.200 418.400 Z" fill="url(#ff)"/></svg>
<div class="b" style="left:0px;top:0px;width:1px;height:519px;background:#8c8c8c;"></div>
</div></body></html>
